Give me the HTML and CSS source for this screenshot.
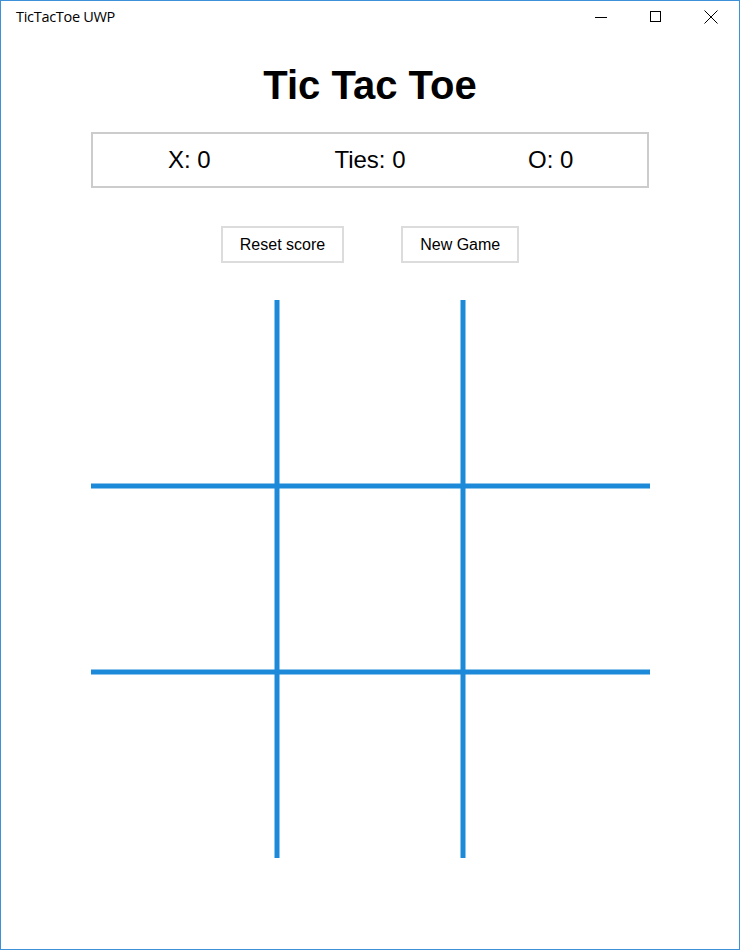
FILE: index.html
```html
<!DOCTYPE html>
<html lang="en">
<head>
    <meta charset="UTF-8">
    <meta name="viewport" content="width=device-width, initial-scale=1.0">
    <title>TicTacToe UWP</title>
    <link rel="stylesheet" href="styles.css">
</head>
<body>
    <div class="window">
        <div class="titlebar">
            <span class="app-name">TicTacToe UWP</span>
            <div class="controls">
                <span class="ctrl">
                    <svg width="14" height="14" viewBox="0 0 14 14"><path d="M1 7.5h12" stroke="#000" stroke-width="1" fill="none"/></svg>
                </span>
                <span class="ctrl">
                    <svg width="14" height="14" viewBox="0 0 14 14"><rect x="1.5" y="1.5" width="10" height="10" stroke="#000" stroke-width="1" fill="none"/></svg>
                </span>
                <span class="ctrl">
                    <svg width="14" height="14" viewBox="0 0 14 14"><path d="M0.5 0.5l13 13M13.5 0.5l-13 13" stroke="#000" stroke-width="1" fill="none"/></svg>
                </span>
            </div>
        </div>

        <div class="app">
            <h1>Tic Tac Toe</h1>

            <div class="score">
                <div class="score-item">X: <span id="score-x">0</span></div>
                <div class="score-item">Ties: <span id="score-ties">0</span></div>
                <div class="score-item">O: <span id="score-o">0</span></div>
            </div>

            <div class="actions">
                <button id="reset-score">Reset score</button>
                <button id="new-game">New Game</button>
            </div>

            <div class="board">
                <svg width="559" height="558" viewBox="0 0 559 558">
                    <line x1="186" y1="0" x2="186" y2="558" class="grid-line"/>
                    <line x1="372" y1="0" x2="372" y2="558" class="grid-line"/>
                    <line x1="0" y1="186" x2="559" y2="186" class="grid-line"/>
                    <line x1="0" y1="372" x2="559" y2="372" class="grid-line"/>
                </svg>
            </div>
        </div>
    </div>
</body>
</html>
```

FILE: styles.css
```css
html, body {
    margin: 0;
    padding: 0;
    background: white;
}
.window {
    width: 740px;
    height: 950px;
    box-sizing: border-box;
    border: 1px solid #3c91d9;
    background: white;
    display: flex;
    flex-direction: column;
}
.titlebar {
    height: 31px;
    display: flex;
    align-items: center;
    justify-content: space-between;
    font-family: "Open Sans", "Noto Sans", sans-serif;
    font-size: 14.5px;
    color: #000;
}
.app-name {
    margin-left: 15px;
    margin-top: -1px;
    letter-spacing: -0.3px;
}
.controls {
    display: flex;
    margin-right: 5px;
}
.ctrl {
    width: 46px;
    height: 31px;
    display: flex;
    align-items: center;
    justify-content: center;
    margin-left: 9px;
}
.ctrl svg {
    display: block;
}
.app {
    display: flex;
    flex-direction: column;
    align-items: center;
    font-family: "Liberation Sans", Arial, sans-serif;
    color: #000;
}
h1 {
    font-size: 40px;
    font-weight: bold;
    line-height: 44px;
    margin: 31px 0 0 0;
}
.score {
    margin-top: 25px;
    width: 558px;
    height: 56px;
    box-sizing: border-box;
    border: 2px solid #cccccc;
    padding: 0 6px;
    display: grid;
    grid-template-columns: 1fr 1fr 1fr;
    align-items: center;
    font-size: 24px;
}
.score-item {
    text-align: center;
}
.actions {
    margin-top: 38px;
    display: flex;
    gap: 57px;
}
button {
    font-family: "Liberation Sans", Arial, sans-serif;
    font-size: 16px;
    color: #000;
    background: white;
    border: 2px solid #dcdcdc;
    height: 37px;
    padding: 0 17px;
    cursor: pointer;
}
button:hover {
    border-color: #999;
}
.board {
    margin-top: 37px;
    margin-left: 1px;
}
.board svg {
    display: block;
}
.grid-line {
    stroke: #1d8ad9;
    stroke-width: 5;
}
```
